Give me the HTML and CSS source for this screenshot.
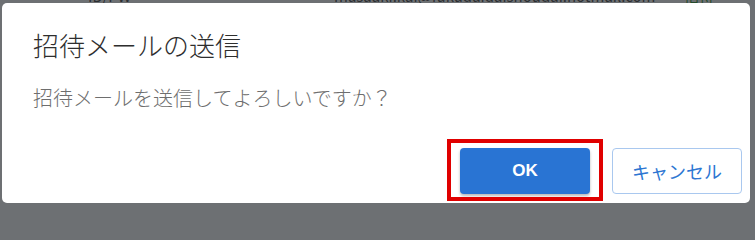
FILE: index.html
```html
<!DOCTYPE html>
<html lang="ja">
<head>
<meta charset="utf-8">
<title>招待メールの送信</title>
<link rel="stylesheet" href="styles.css">
</head>
<body>
<div class="page">
  <div class="table-strip">
    <div class="table-row">
      <span class="cell cell-id">ID/PW</span>
      <span class="cell cell-mail">masaaki.kai@fukudaidaishoudai.hotmail.com</span>
      <span class="cell cell-status">招待</span>
    </div>
  </div>
</div>
<div class="overlay"></div>
<div class="dialog" role="dialog">
  <h2 class="dialog-title">招待メールの送信</h2>
  <p class="dialog-message">招待メールを送信してよろしいですか？</p>
  <div class="dialog-actions">
    <span class="highlight">
      <button class="btn btn-primary" type="button">OK</button>
    </span>
    <button class="btn btn-secondary" type="button">キャンセル</button>
  </div>
</div>
</body>
</html>
```
FILE: styles.css
```css
* { box-sizing: border-box; }
html, body {
  margin: 0;
  padding: 0;
  width: 755px;
  height: 208px;
  overflow: hidden;
  background: #ffffff;
  font-family: "Noto Sans CJK JP", "Noto Sans", sans-serif;
}
.page {
  width: 755px;
  height: 208px;
  background: #ffffff;
}
.table-strip {
  height: 20px;
  overflow: hidden;
}
.table-row {
  display: flex;
  margin-top: -14px;
  height: 20px;
  align-items: flex-end;
  font-size: 15px;
  line-height: 20px;
  color: #333333;
}
.cell-id { margin-left: 88px; width: 246px; }
.cell-mail { width: 350px; }
.cell-status { color: #1e8a1e; }
.overlay {
  position: absolute;
  inset: 0;
  background: rgba(40, 44, 48, 0.68);
}
.dialog {
  position: absolute;
  left: 2px;
  top: 3px;
  width: 748px;
  height: 200px;
  background: #ffffff;
  border-radius: 5px;
  display: flex;
  flex-direction: column;
  padding: 24px 8px 9px 0;
}
.dialog-title {
  margin: 0;
  padding-left: 31px;
  font-size: 26px;
  font-weight: 300;
  line-height: 36px;
  color: #2e2e2e;
}
.dialog-message {
  margin: 21px 0 0;
  padding-left: 31px;
  font-size: 20px;
  font-weight: 300;
  line-height: 28px;
  color: #6e6e6e;
}
.dialog-actions {
  margin-top: auto;
  display: flex;
  justify-content: flex-end;
  gap: 22px;
}
.highlight {
  position: relative;
  display: flex;
}
.highlight::after {
  content: "";
  position: absolute;
  top: -9px;
  bottom: -7px;
  left: -13px;
  right: -13px;
  border: 4px solid #e00000;
  pointer-events: none;
}
.btn {
  width: 130px;
  height: 46px;
  border-radius: 4px;
  margin: 0;
  padding: 0;
  cursor: pointer;
}
.btn-primary {
  background: #2974d3;
  border: none;
  color: #ffffff;
  font-family: "Liberation Sans", Arial, sans-serif;
  font-weight: 700;
  font-size: 17px;
  box-shadow: 0 2px 3px rgba(0, 0, 0, 0.28);
}
.btn-secondary {
  background: #ffffff;
  border: 1px solid #a9c8ef;
  color: #2d76d2;
  font-family: "Noto Sans CJK JP", sans-serif;
  font-size: 18px;
}
```
